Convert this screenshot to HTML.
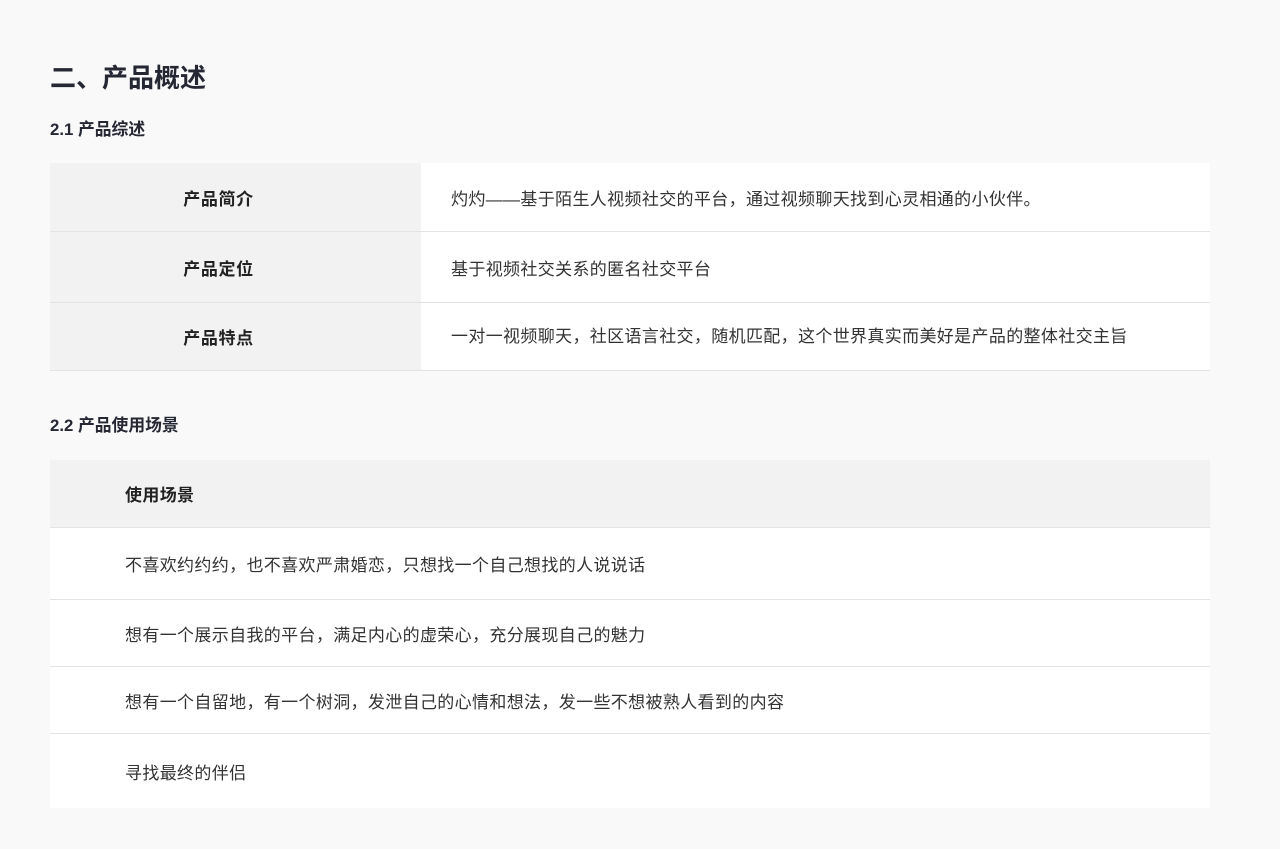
<!DOCTYPE html>
<html><head><meta charset="utf-8"><style>
*{margin:0;padding:0;box-sizing:border-box}
body{width:1280px;height:849px;background:#f9f9f9;font-family:"Liberation Sans","Noto Sans CJK SC",sans-serif;color:#222;position:relative;overflow:hidden}
h1{position:absolute;left:50px;top:61px;font-size:26px;font-weight:700;color:#252733;line-height:34px}
h2{position:absolute;left:50px;font-size:16.8px;font-weight:600;color:#252733;line-height:22px}
.row{position:absolute;left:50px;width:1160px;background:#fff;border-bottom:1px solid #e3e3e3;display:flex;align-items:center;font-size:17px;letter-spacing:0.35px;color:#333}
.l{width:371px;height:100%;background:#f2f2f2;display:flex;align-items:center;justify-content:center;padding-right:34px;font-weight:600;color:#222;letter-spacing:0.6px}
.r{padding-left:30px}
.s{padding-left:75px}
</style></head><body>
<h1>二、产品概述</h1>
<h2 style="top:119px">2.1 产品综述</h2>
<div class="row" style="top:163px;height:69px"><div class="l">产品简介</div><div class="r">灼灼——基于陌生人视频社交的平台，通过视频聊天找到心灵相通的小伙伴。</div></div>
<div class="row" style="top:232px;height:71px"><div class="l">产品定位</div><div class="r">基于视频社交关系的匿名社交平台</div></div>
<div class="row" style="top:303px;height:68px"><div class="l">产品特点</div><div class="r" style="position:relative;top:-2px">一对一视频聊天，社区语言社交，随机匹配，这个世界真实而美好是产品的整体社交主旨</div></div>
<h2 style="top:415px">2.2 产品使用场景</h2>
<div class="row" style="top:460px;height:68px;background:#f2f2f2;font-weight:600;color:#222"><div class="s">使用场景</div></div>
<div class="row" style="top:528px;height:72px"><div class="s">不喜欢约约约，也不喜欢严肃婚恋，只想找一个自己想找的人说说话</div></div>
<div class="row" style="top:600px;height:67px"><div class="s">想有一个展示自我的平台，满足内心的虚荣心，充分展现自己的魅力</div></div>
<div class="row" style="top:667px;height:67px"><div class="s">想有一个自留地，有一个树洞，发泄自己的心情和想法，发一些不想被熟人看到的内容</div></div>
<div class="row" style="top:734px;height:74px;border-bottom:none"><div class="s">寻找最终的伴侣</div></div>
</body></html>
